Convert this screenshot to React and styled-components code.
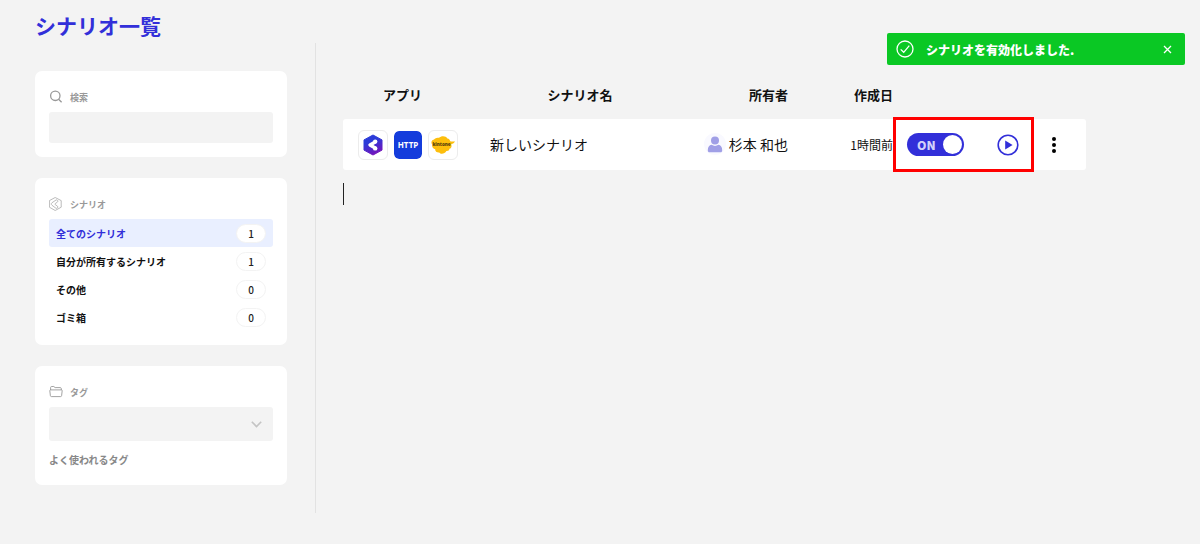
import { useState } from "react";
import styled, { createGlobalStyle } from "styled-components";

const GlobalStyle = createGlobalStyle`
  * {
    box-sizing: border-box;
  }
  body {
    margin: 0;
    background: #f3f3f3;
    color: #111;
    font-family: "Noto Sans CJK JP", sans-serif;
  }
  button, input, select {
    font-family: inherit;
  }
  button {
    padding: 0;
    border: none;
    background: none;
    color: inherit;
    cursor: pointer;
  }
  svg {
    display: block;
    flex: none;
  }
`;

const Page = styled.div`
  position: relative;
  min-height: 100vh;
  padding: 10px 114px 30px 35px;
`;

const Title = styled.h1`
  margin: 0 0 3px;
  color: #322fd9;
  font-size: 21px;
  line-height: 30px;
`;

const Columns = styled.div`
  display: flex;
`;

const Sidebar = styled.aside`
  display: flex;
  flex-direction: column;
  flex: none;
  gap: 21px;
  width: 281px;
  padding: 28px 28px 28px 0;
  border-right: 1px solid #e2e2e2;
`;

const Card = styled.section`
  padding: 15px 14px 14px;
  border-radius: 7px;
  background: #fff;
`;

const CardHead = styled.div`
  display: flex;
  align-items: center;
  gap: 7px;
  height: 22px;
  margin-bottom: 4px;
  color: #999;
  font-size: 9px;
  font-weight: 700;
`;

const SearchInput = styled.input`
  display: block;
  width: 100%;
  height: 31px;
  padding: 0 8px;
  border: none;
  border-radius: 3px;
  background: #f3f3f3;
`;

const FilterList = styled.ul`
  margin: 0;
  padding: 0;
  list-style: none;
`;

const FilterButton = styled.button`
  display: flex;
  align-items: center;
  justify-content: space-between;
  width: 100%;
  height: 28px;
  padding: 0 7px;
  border-radius: 3px;
  background: ${({ $active }) => ($active ? "#e9efff" : "transparent")};
  color: ${({ $active }) => ($active ? "#322fd9" : "#111")};
  font-size: 10px;
  font-weight: 700;
`;

const Count = styled.span`
  width: 30px;
  height: 19px;
  border: 1px solid #f3f3f3;
  border-radius: 10px;
  background: #fff;
  color: #222;
  font-weight: 500;
  line-height: 17px;
  text-align: center;
`;

const SelectBox = styled.div`
  position: relative;
  select {
    display: block;
    width: 100%;
    height: 34px;
    border: none;
    border-radius: 3px;
    background: #f3f3f3;
    appearance: none;
  }
  svg {
    position: absolute;
    top: 14px;
    right: 11px;
    pointer-events: none;
  }
`;

const TagNote = styled.p`
  margin: 8px 0 0;
  color: #888;
  font-size: 10px;
  font-weight: 700;
  line-height: 22px;
`;

const Main = styled.main`
  flex: 1;
  min-width: 0;
  padding: 30px 0 0 27px;
`;

const Table = styled.table`
  width: 100%;
  border-spacing: 0;
  table-layout: fixed;

  th {
    height: 46px;
    padding: 0 0 3px;
    font-size: 13px;
  }
  td {
    height: 51px;
    padding: 0;
    background: #fff;
    font-size: 14px;
    white-space: nowrap;
  }
  td:first-child {
    padding-left: 15px;
    border-radius: 3px 0 0 3px;
  }
  td:last-child {
    border-radius: 0 3px 3px 0;
  }
  .apps {
    width: 119px;
  }
  .owner {
    width: 90px;
    text-align: right;
  }
  .date {
    width: 105px;
    text-align: right;
  }
  td.name {
    padding: 0 0 2px 28px;
  }
  td.owner {
    padding-bottom: 2px;
  }
  td.date {
    font-size: 12px;
  }
  .actions {
    position: relative;
    width: 193px;
  }
`;

const Apps = styled.div`
  display: flex;
  gap: 5px;
`;

const AppIcon = styled.span`
  display: flex;
  align-items: center;
  justify-content: center;
  width: 30px;
  height: 30px;
  border: 1px solid ${({ $fill }) => ($fill ? "#fff" : "#ececec")};
  border-radius: 6px;
  background: ${({ $fill }) => $fill || "#fff"};
  background-clip: padding-box;
  color: #fff;
  font-family: "Noto Sans", sans-serif;
  font-size: 8px;
  font-weight: 700;
`;

const Owner = styled.div`
  display: flex;
  align-items: center;
  justify-content: flex-end;
  gap: 3px;
`;

const Actions = styled.div`
  display: flex;
  align-items: center;
  justify-content: space-between;
  padding: 0 30px 0 14px;
`;

const Switch = styled.label`
  display: flex;
  align-items: center;
  justify-content: space-between;
  width: 57px;
  height: 23px;
  padding: 0 2px 0 10px;
  border-radius: 12px;
  background: ${({ $on }) => ($on ? "#322fd9" : "#bbb")};
  color: #d3d2fa;
  font-size: 12px;
  font-weight: 900;
  cursor: pointer;

  input {
    width: 19px;
    height: 19px;
    margin: 0;
    border-radius: 50%;
    background: #fff;
    appearance: none;
  }
`;

const Highlight = styled.div`
  position: absolute;
  top: -2px;
  left: 0;
  width: 141px;
  height: 55px;
  border: 3px solid #f00;
  pointer-events: none;
`;

const Caret = styled.div`
  width: 1px;
  height: 22px;
  margin-top: 13px;
  background: #222;
`;

const Toast = styled.div`
  position: absolute;
  top: 33px;
  right: 15px;
  display: flex;
  align-items: center;
  width: 298px;
  height: 32px;
  padding: 0 13px 0 9px;
  border-radius: 2px;
  background: #0ac824;
  color: #fff;
  font-size: 12px;
  font-weight: 900;

  p {
    flex: 1;
    margin: 0 0 0 12px;
  }
`;

const filters = [
  { label: "全てのシナリオ", count: 1 },
  { label: "自分が所有するシナリオ", count: 1 },
  { label: "その他", count: 0 },
  { label: "ゴミ箱", count: 0 },
];

const SearchIcon = () => (
  <svg width="14" height="14" viewBox="0 0 14 14" fill="none" stroke="#999" strokeWidth="1.3">
    <circle cx="6.3" cy="5.8" r="4.7" />
    <path d="M9.6 9.2 12.6 12.2" />
  </svg>
);

const ScenarioIcon = () => (
  <svg width="14" height="14" viewBox="0 0 14 14" fill="none" stroke="#aaa" strokeWidth="0.8">
    <path d="M6.2.5 12.2 3.6V10.2L6.2 13.5.4 10.2V3.6Z" strokeLinejoin="round" />
    <path d="M7.2 2.9a1.3 1.3 0 0 1 1.2 2.2L6.2 6.6c-.4.3-.4.7 0 1L8.4 9.1a1.3 1.3 0 0 1-1.5 2.1L2.9 8.2c-.9-.7-.9-1.7 0-2.4Z" />
  </svg>
);

const FolderIcon = () => (
  <svg width="14" height="14" viewBox="0 0 14 14" fill="none" stroke="#999" strokeWidth="0.9" strokeLinejoin="round">
    <path d="M1.6 5V2.600c0-.7.4-1.100 1-1.100h2.200l1.300 1.100h5.200c.6 0 1 .4 1 1V5" />
    <path d="M1.500 4.900h11c.5 0 .8.3.7.8l-.6 5c-.1.6-.5.9-1 .9H2.400c-.5 0-.9-.3-1-.9l-.6-5c0-.5.2-.8.7-.8Z" />
  </svg>
);

const YoomIcon = () => (
  <svg width="22" height="22" viewBox="0 0 22 22">
    <defs>
      <linearGradient id="hex" x1="0.3" y1="0" x2="0.7" y2="1">
        <stop offset="0.3" stopColor="#2b3bd8" />
        <stop offset="1" stopColor="#7b10b8" />
      </linearGradient>
    </defs>
    <path d="M11 1 20 5.900V16.100L11 21 2 16.100V5.900Z" fill="url(#hex)" stroke="url(#hex)" strokeLinejoin="round" />
    <g fill="#fff" stroke="#fff">
      <circle cx="13.200" cy="7.600" r="2.200" stroke="none" />
      <circle cx="13.200" cy="14.400" r="2.200" stroke="none" />
      <path d="M12.800 8.200 8 11l4.800 2.800" fill="none" strokeWidth="3.400" strokeLinecap="round" strokeLinejoin="round" />
    </g>
  </svg>
);

const KintoneIcon = () => (
  <svg width="24" height="18" viewBox="0 0 24 18">
    <path
      d="M3 3.600C4.600 1.800 6.400 2 8 1.800 10-.4 15-.4 16.400 2.400c1.800.2 2.400 1.400 2.800 2.800 1.600.4 3 .2 4.600 0-.4 1.800-1.800 2.400-3.600 3 .8 2.200.2 4-1.800 4.600 0 1.600-1.400 2.400-3 2.200-1.600 2.800-5.600 3.600-7.200 1.400C5.800 16.600 4 15.400 4.200 13.200 2 12.800.6 10.800 1.400 8.800-.4 7.200.4 4 3 3.600Z"
      fill="#fdbe0c"
    />
    <text x="10.500" y="10" textAnchor="middle" fontSize="4.500" fontWeight="900" fill="#59430a">kintone</text>
  </svg>
);

const UserIcon = () => (
  <svg width="22" height="22" viewBox="0 0 22 22">
    <circle cx="11" cy="11" r="11" fill="#f9f9ff" />
    <g fill="#a09fe6">
      <circle cx="11" cy="7.500" r="4" />
      <path d="M3.800 17.200c0-3 1.400-5 3.800-5.400 2 1.500 4.800 1.500 6.800 0 2.400.4 3.800 2.400 3.800 5.400 0 1.400-.6 2-1.800 2H5.600c-1.200 0-1.800-.6-1.800-2Z" />
    </g>
  </svg>
);

const PlayIcon = () => (
  <svg width="22" height="22" viewBox="0 0 22 22">
    <circle cx="11" cy="11" r="9.800" fill="none" stroke="#322fd9" strokeWidth="1.600" />
    <path d="M8.200 6.600 15.600 11 8.200 15.400Z" fill="#322fd9" />
  </svg>
);

const DotsIcon = () => (
  <svg width="4" height="18" viewBox="0 0 4 18">
    <circle cx="2" cy="3" r="2" />
    <circle cx="2" cy="9" r="2" />
    <circle cx="2" cy="15" r="2" />
  </svg>
);

const CheckIcon = () => (
  <svg width="18" height="18" viewBox="0 0 18 18" fill="none" stroke="#fff" strokeWidth="1.300">
    <circle cx="9" cy="9" r="8" />
    <path d="M4.700 9.400 7.700 12.300 13.300 5.700" />
  </svg>
);

const App = () => {
  const [active, setActive] = useState(0);
  const [enabled, setEnabled] = useState(true);
  const [showToast, setShowToast] = useState(true);

  return (
    <Page>
      <GlobalStyle />
      <Title>シナリオ一覧</Title>

      <Columns>
        <Sidebar>
          <Card>
            <CardHead as="label" htmlFor="search">
              <SearchIcon />
              検索
            </CardHead>
            <SearchInput id="search" type="text" />
          </Card>

          <Card>
            <CardHead>
              <ScenarioIcon />
              シナリオ
            </CardHead>
            <FilterList>
              {filters.map((filter, index) => (
                <li key={filter.label}>
                  <FilterButton
                    $active={index === active}
                    onClick={() => setActive(index)}
                  >
                    {filter.label}
                    <Count>{filter.count}</Count>
                  </FilterButton>
                </li>
              ))}
            </FilterList>
          </Card>

          <Card>
            <CardHead as="label" htmlFor="tag">
              <FolderIcon />
              タグ
            </CardHead>
            <SelectBox>
              <select id="tag" />
              <svg width="11" height="7" viewBox="0 0 11 7" fill="none" stroke="#c4c4c4" strokeWidth="1.600">
                <path d="M.8.8 5.500 5.500 10.200.8" />
              </svg>
            </SelectBox>
            <TagNote>よく使われるタグ</TagNote>
          </Card>
        </Sidebar>

        <Main>
          <Table>
            <thead>
              <tr>
                <th className="apps">アプリ</th>
                <th>シナリオ名</th>
                <th className="owner">所有者</th>
                <th className="date">作成日</th>
                <th className="actions" aria-label="操作" />
              </tr>
            </thead>
            <tbody>
              <tr>
                <td>
                  <Apps>
                    <AppIcon>
                      <YoomIcon />
                    </AppIcon>
                    <AppIcon $fill="#143cdc">HTTP</AppIcon>
                    <AppIcon>
                      <KintoneIcon />
                    </AppIcon>
                  </Apps>
                </td>
                <td className="name">新しいシナリオ</td>
                <td className="owner">
                  <Owner>
                    <UserIcon />
                    杉本 和也
                  </Owner>
                </td>
                <td className="date">1時間前</td>
                <td className="actions">
                  <Actions>
                    <Switch $on={enabled}>
                      {enabled ? "ON" : "OFF"}
                      <input
                        type="checkbox"
                        checked={enabled}
                        onChange={() => setEnabled(!enabled)}
                      />
                    </Switch>
                    <button aria-label="実行">
                      <PlayIcon />
                    </button>
                    <button aria-label="メニュー">
                      <DotsIcon />
                    </button>
                  </Actions>
                  <Highlight />
                </td>
              </tr>
            </tbody>
          </Table>
          <Caret />
        </Main>
      </Columns>

      {showToast && (
        <Toast role="status">
          <CheckIcon />
          <p>シナリオを有効化しました.</p>
          <button aria-label="閉じる" onClick={() => setShowToast(false)}>
            <svg width="9" height="9" viewBox="0 0 9 9" stroke="#fff" strokeWidth="1.300">
              <path d="M1 1 8 8M8 1 1 8" />
            </svg>
          </button>
        </Toast>
      )}
    </Page>
  );
};

export default App;
